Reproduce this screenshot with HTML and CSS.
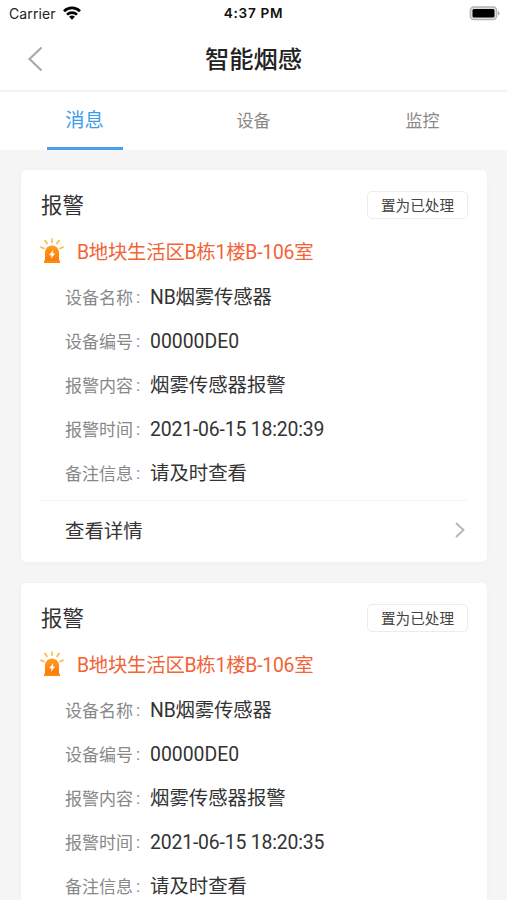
FILE: index.html
```html
<!DOCTYPE html>
<html lang="zh-CN">
<head>
<meta charset="utf-8">
<title>智能烟感</title>
<link rel="stylesheet" href="styles.css">
</head>
<body>
<svg class="defs" aria-hidden="true">
  <defs>
    <linearGradient id="lamp" x1="0" y1="0" x2="0" y2="1"><stop offset="0" stop-color="#ff9d20"/><stop offset="1" stop-color="#fb7a08"/></linearGradient>
    <symbol id="alarm" viewBox="0 0 24 26">
      <g stroke="#fcb83c" stroke-width="1.600" stroke-linecap="round"><path d="M12 1v3.300M5 2.500l2 3M19 2.500l-2 3M1 9.200l3 1.200M23 9.200l-3 1.200"/></g>
      <path fill="url(#lamp)" d="M5 23V14.500a7 7 0 0 1 14 0V23z"/>
      <rect x="4" y="22.400" width="16" height="2.600" rx=".6" fill="#fb8a12"/>
      <path fill="#fff" d="M13.400 11.800l-4.300 5.500h2.500l-.8 3.700 4.300-5.500h-2.500z"/>
    </symbol>
  </defs>
</svg>
<div class="status">
  <div class="carrier"><span>Carrier</span>
    <svg width="18" height="14" viewBox="0 0 18 14" fill="none" stroke="#000" stroke-width="2.700"><path d="M1 5.200a11.500 11.500 0 0 1 16 0M4 8.600a7.200 7.200 0 0 1 10 0"/><path fill="#000" stroke="none" d="M9 13.800l-2.900-3a4.200 4.200 0 0 1 5.800 0z"/></svg>
  </div>
  <div class="time">4:37 PM</div>
  <svg class="battery" width="31" height="15" viewBox="0 0 31 15"><rect x="1.300" y="1" width="26.400" height="12.600" rx="3.500" fill="#ddd" stroke="#b4b4b4" stroke-width="1.300"/><rect x="3.500" y="3" width="22" height="8.600" rx="1.500" fill="#000"/><path d="M29 5v4.600q1.600-.7 1.600-2.300t-1.600-2.300" fill="#aaa"/></svg>
</div>
<header class="nav">
  <svg class="back" width="16" height="26" viewBox="0 0 16 26" fill="none" stroke="#aaa" stroke-width="2.200"><path d="M14.500 1.500L2.500 13l12 11.500"/></svg>
  <h1>智能烟感</h1>
</header>
<nav class="tabs"><div class="tab active"><span>消息</span></div><div class="tab"><span>设备</span></div><div class="tab"><span>监控</span></div></nav>
<main>
  <section class="card">
    <div class="head"><h2>报警</h2><button>置为已处理</button></div>
    <div class="place"><svg width="24" height="26"><use href="#alarm"/></svg><span>B地块生活区B栋1楼B-106室</span></div>
    <dl>
      <div><dt>设备名称<i>:</i></dt><dd class="name">NB烟雾传感器</dd></div>
      <div><dt>设备编号<i>:</i></dt><dd>00000DE0</dd></div>
      <div><dt>报警内容<i>:</i></dt><dd>烟雾传感器报警</dd></div>
      <div><dt>报警时间<i>:</i></dt><dd class="date">2021-06-15 18:20:39</dd></div>
      <div><dt>备注信息<i>:</i></dt><dd>请及时查看</dd></div>
    </dl>
    <div class="more"><span>查看详情</span><svg width="10" height="16" viewBox="0 0 10 16" fill="none" stroke="#b4b4b4" stroke-width="1.800"><path d="M1 1l7.500 7L1 15"/></svg></div>
  </section>
  <section class="card">
    <div class="head"><h2>报警</h2><button>置为已处理</button></div>
    <div class="place"><svg width="24" height="26"><use href="#alarm"/></svg><span>B地块生活区B栋1楼B-106室</span></div>
    <dl>
      <div><dt>设备名称<i>:</i></dt><dd class="name">NB烟雾传感器</dd></div>
      <div><dt>设备编号<i>:</i></dt><dd>00000DE0</dd></div>
      <div><dt>报警内容<i>:</i></dt><dd>烟雾传感器报警</dd></div>
      <div><dt>报警时间<i>:</i></dt><dd class="date">2021-06-15 18:20:35</dd></div>
      <div><dt>备注信息<i>:</i></dt><dd>请及时查看</dd></div>
    </dl>
  </section>
</main>
</body>
</html>
```
FILE: styles.css
```css
* { box-sizing: border-box; }
html, body { height: 100%; }
body {
  margin: 0;
  overflow: hidden;
  display: flex;
  flex-direction: column;
  background: #f5f5f5;
  color: #333;
  font-family: Roboto, "Noto Sans CJK SC", sans-serif;
}
h1, h2, dl, dd { margin: 0; font-weight: 400; }
svg { display: block; flex: none; }
.defs { position: absolute; width: 0; height: 0; }
.status {
  flex: none;
  height: 27px;
  padding: 0 7px 0 9px;
  display: grid;
  grid-template-columns: 1fr auto 1fr;
  align-items: center;
  background: #fff;
  color: #222;
  font: 14px/27px Inter, sans-serif;
}
.carrier { display: flex; align-items: center; gap: 7px; letter-spacing: .1px; }
.carrier svg { margin-top: -2px; }
.time { font-size: 13.600px; font-weight: 600; letter-spacing: .68px; margin-left: -2px; color: #111; }
.battery { justify-self: end; }
.nav {
  flex: none;
  height: 65px;
  padding: 1px 26.500px 0;
  display: grid;
  grid-template-columns: 1fr auto 1fr;
  align-items: center;
  background: #fff;
  border-bottom: 2px solid #f3f3f3;
}
.nav h1 { font-size: 24.300px; line-height: 36px; font-weight: 500; color: #222; padding-top: 1px; }
.tabs { flex: none; height: 58px; display: grid; grid-template-columns: repeat(3, 1fr); background: #fff; }
.tab { display: flex; justify-content: center; font-size: 17px; line-height: 52px; color: #888; padding-top: 3px; }
.tab span { width: 76px; text-align: center; }
.tab.active { font-size: 19.300px; color: #3b9cee; }
.tab.active span { border-bottom: 3px solid #4a9fec; }
main { flex: 1; min-height: 0; padding: 20px 20px 0 21px; overflow: hidden; }
.card {
  height: 392px;
  margin-bottom: 21px;
  padding: 18px 19px 0 20px;
  background: #fff;
  border-radius: 5px;
  box-shadow: 0 1px 4px rgba(0, 0, 0, .03);
}
.head { height: 34px; display: flex; justify-content: space-between; align-items: center; }
.head h2 { font-size: 21.400px; line-height: 34px; padding-top: 2px; }
.head button {
  width: 101px;
  height: 28px;
  margin-top: -1px;
  padding: 0;
  background: #fff;
  border: 1px solid #ececec;
  border-radius: 5px;
  color: #444;
  font: 14.600px/25px "Noto Sans CJK SC", sans-serif;
}
.place { height: 54px; display: flex; align-items: center; gap: 13px; margin-left: -1px; color: #f26336; font-size: 19.400px; line-height: 30px; padding-top: 6px; letter-spacing: -.25px; white-space: nowrap; }
.place svg { margin-top: -2px; }
.place span { padding-top: 2px; }
dl div { height: 44px; display: flex; align-items: center; padding-left: 24px; }
dt { width: 85px; font-size: 17px; line-height: 30px; color: #888; white-space: nowrap; margin-top: -1px; }
dt i { font-style: normal; margin-left: 3px; position: relative; top: -1px; }
dd { font-size: 19.400px; line-height: 30px; white-space: nowrap; }
.name { letter-spacing: -.15px; }
.date { letter-spacing: -.17px; }
.more {
  margin-top: 4px;
  height: 60px;
  display: flex;
  align-items: center;
  justify-content: space-between;
  padding: 0 3px 2px 24px;
  border-top: 1px solid #f5f5f5;
  font-size: 19.400px;
}
```
